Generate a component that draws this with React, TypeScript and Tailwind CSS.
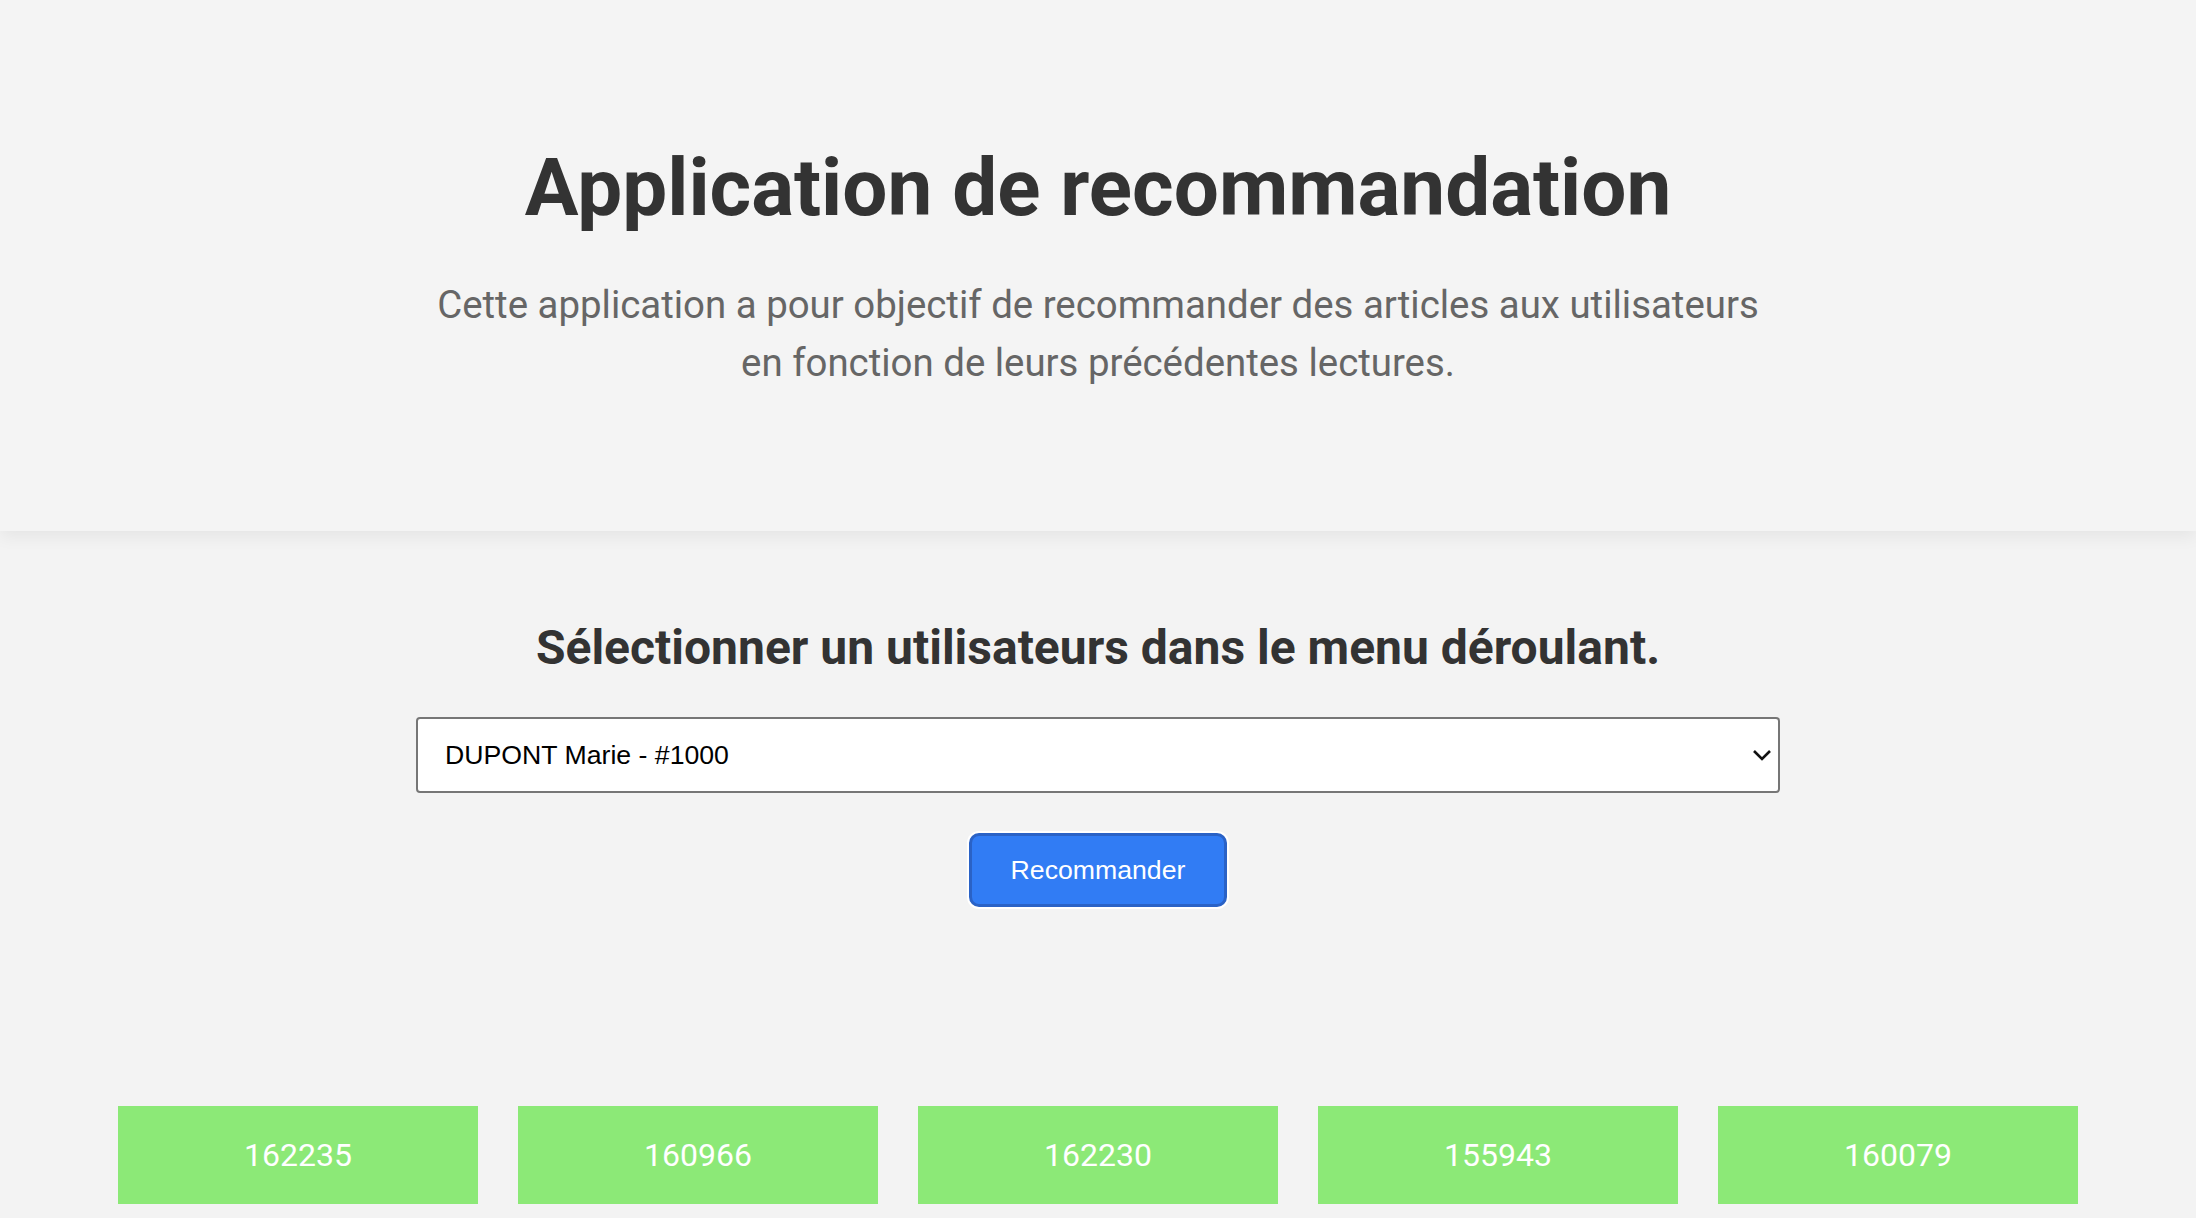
import React from "react";

const ids = ["162235", "160966", "162230", "155943", "160079"];

export default function App() {
  return (
    <div className="min-h-screen w-full bg-[#f3f3f3] font-['Roboto',sans-serif]">
      <header className="relative z-10 bg-[#f4f4f4] pt-[140px] pb-[140px] text-center shadow-[0_6px_16px_rgba(0,0,0,0.06)]">
        <h1 className="text-[80px] font-bold leading-[96px] text-[#333333]">
          Application de recommandation
        </h1>
        <p className="mx-auto mt-[40px] text-[38.4px] leading-[57.6px] text-[#666666]">
          Cette application a pour objectif de recommander des articles aux utilisateurs
          <br />
          en fonction de leurs précédentes lectures.
        </p>
      </header>

      <main className="flex flex-col items-center pt-[88px]">
        <h2 className="text-[48px] font-bold leading-[57.6px] text-[#333333]">
          Sélectionner un utilisateurs dans le menu déroulant.
        </h2>

        <div className="relative mt-[40px] w-[1364px]">
          <select
            defaultValue="1000"
            className="h-[76px] w-full appearance-none rounded-[4px] border-2 border-[#767676] bg-white pl-[27px] pr-[50px] font-['Liberation_Sans',Arial,sans-serif] text-[26.67px] text-black outline-none"
          >
            <option value="1000">DUPONT Marie - #1000</option>
          </select>
          <svg
            className="pointer-events-none absolute right-[8px] top-[31px]"
            width="20"
            height="14"
            viewBox="0 0 20 14"
            fill="none"
          >
            <path d="M2 3 L10 11 L18 3" stroke="#111" strokeWidth="2.6" />
          </svg>
        </div>

        <button
          type="button"
          className="mt-[40px] h-[74px] w-[258px] rounded-[10px] border-[3px] border-[#2a62c6] bg-[#317cf4] font-['Liberation_Sans',Arial,sans-serif] text-[26.67px] text-white shadow-[0_0_0_2px_#ffffff]"
        >
          Recommander
        </button>

        <div className="mt-[199px] flex gap-[40px]">
          {ids.map((id) => (
            <div
              key={id}
              className="flex h-[98px] w-[360px] items-center justify-center bg-[#8ce977] text-[32px] text-white"
            >
              {id}
            </div>
          ))}
        </div>
        <div className="h-[40px]" />
      </main>
    </div>
  );
}
